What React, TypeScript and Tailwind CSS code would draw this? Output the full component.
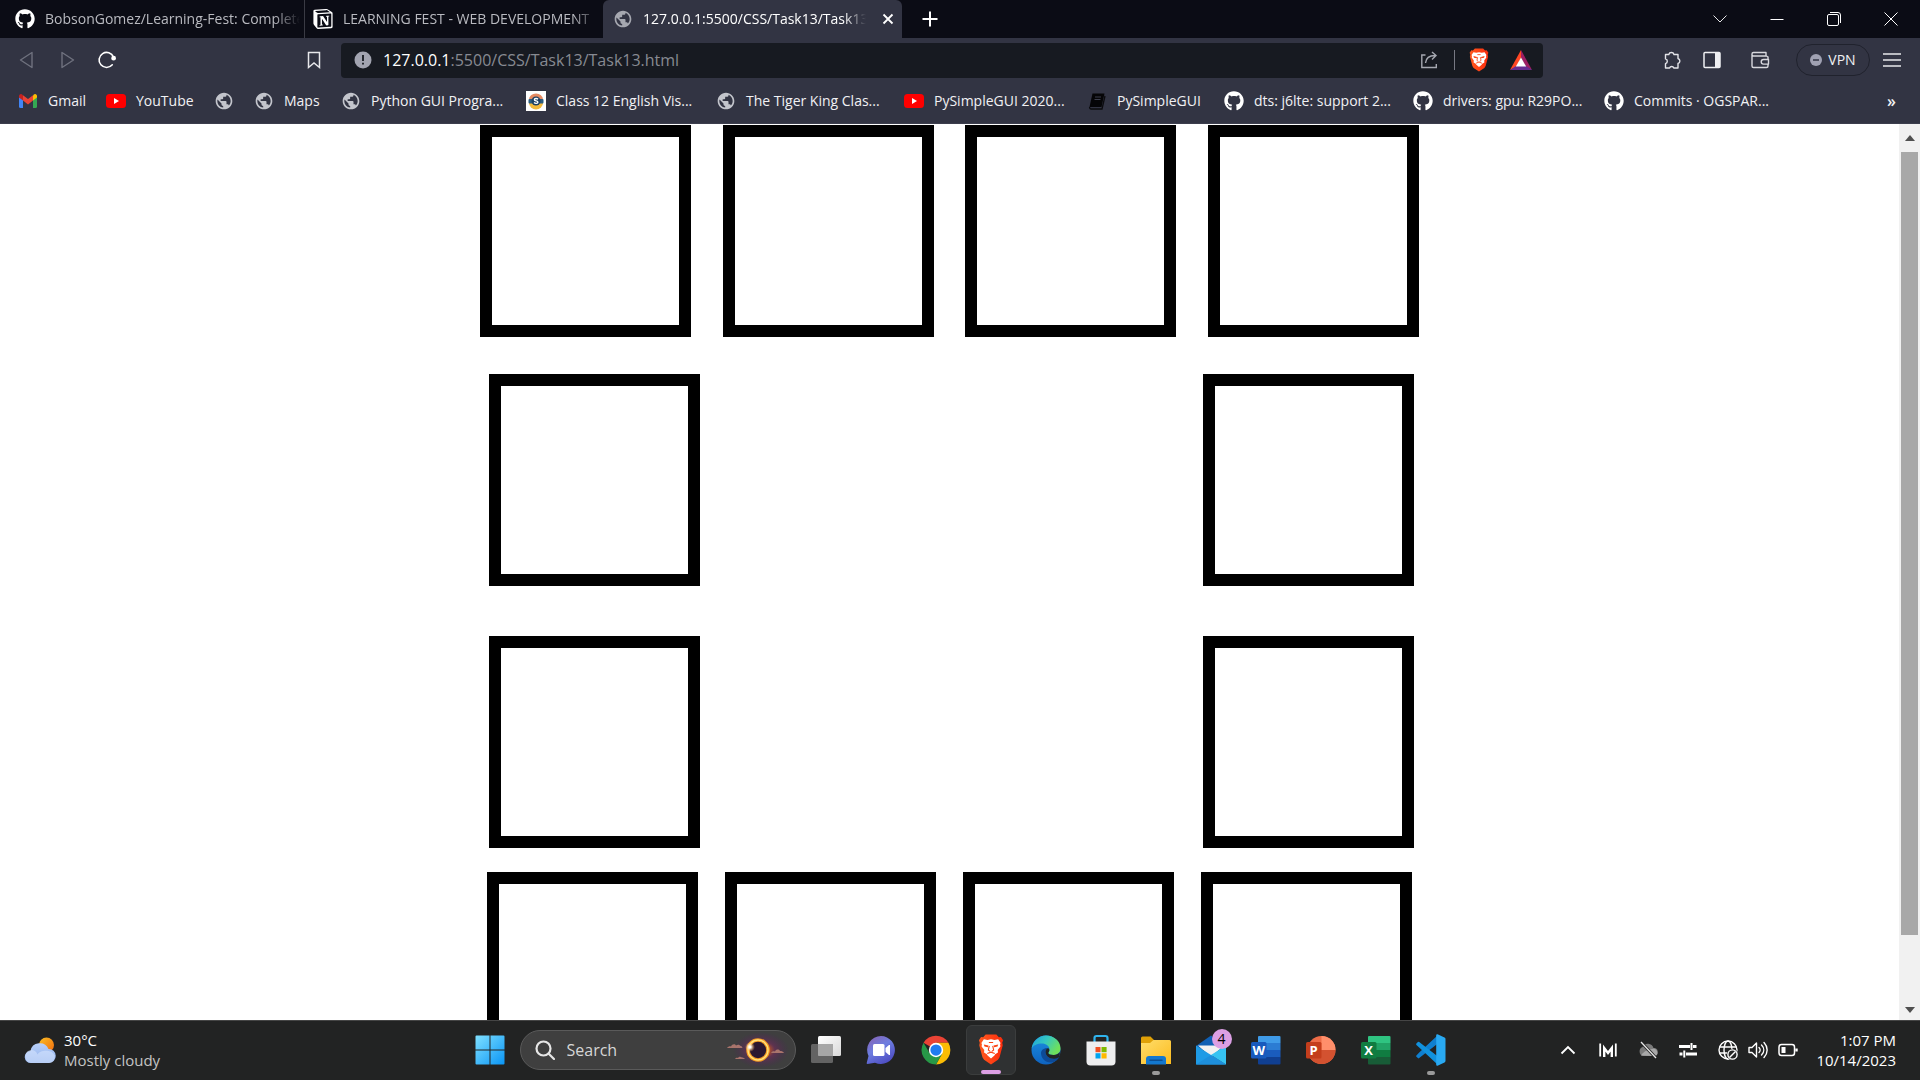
import React from "react";
import { FaGithub } from "react-icons/fa";
import { MdPublic } from "react-icons/md";
import { SiNotion } from "react-icons/si";

type IconProps = { className?: string };

/* ---------- favicons ---------- */

const GlobeIcon = () => <MdPublic className="size-5 text-[#c3c5cc]" />;
const GithubIcon = () => <FaGithub className="size-5 text-white" />;

const YoutubeIcon = () => (
  <svg viewBox="0 0 20 20" className="size-5">
    <rect x="0" y="3" width="20" height="14" rx="3.5" fill="#f00" />
    <path d="M8 7v6l5-3z" fill="#fff" />
  </svg>
);

const GmailIcon = () => (
  <svg viewBox="0 0 20 20" className="size-5">
    <path d="M1 6v9.5A1.5 1.5 0 0 0 2.500 17H5V8z" fill="#4285f4" />
    <path d="M19 6v9.500A1.500 1.500 0 0 1 17.500 17H15V8z" fill="#34a853" />
    <path d="M15 4.500V9.600l4-3V5a2 2 0 0 0-3.200-1.600z" fill="#fbbc04" />
    <path d="M5 4.500V9.600l-4-3V5a2 2 0 0 1 3.200-1.600z" fill="#c5221f" />
    <path d="M5 9.600V4.200l5 3.800 5-3.800v5.400l-5 3.800z" fill="#ea4335" />
  </svg>
);

const SchoolIcon = () => (
  <svg viewBox="0 0 20 20" className="size-5">
    <rect width="20" height="20" fill="#fff" />
    <path d="M3 8.500a7 6 0 0 1 14 0z" fill="#e58a62" />
    <path d="M3 12a7 6.500 0 0 0 14 0z" fill="#f3b93c" />
    <rect x="2.500" y="8" width="15" height="4.500" rx="1" fill="#2b5d80" />
    <circle cx="10" cy="10" r="4.500" fill="#1c3f63" />
    <path d="M12 8.200c-1-1-3.600-.9-3.600.5 0 1.600 3.500.8 3.500 2.500 0 1.400-2.700 1.500-3.900.4" fill="none" stroke="#fff" strokeWidth="1.400" />
  </svg>
);

const BookIcon = () => (
  <svg viewBox="0 0 20 20" className="size-5">
    <path d="M5.500 2.500h12l-3 13.500h-12z" fill="#050507" />
    <path d="M2.500 16c0 1.500.5 2 1.500 2h11l3-13" fill="none" stroke="#0b0b0e" strokeWidth="1.300" />
    <path d="M8 6h6M7.500 8.500h6" stroke="#3d3f4d" strokeWidth="1" />
  </svg>
);

/* Notion mark on a white cube face */
const NotionIcon = () => (
  <span className="flex size-5 items-center justify-center">
    <SiNotion className="size-5 text-white" />
  </span>
);

const BraveIcon = ({ className = "" }: IconProps) => (
  <svg viewBox="0 0 24 29" className={className}>
    <defs>
      <linearGradient id="brave" x1="0" y1="0" x2="1" y2="0">
        <stop offset="0" stopColor="#ff5a1f" />
        <stop offset="1" stopColor="#fb2b0c" />
      </linearGradient>
    </defs>
    <path d="M7 .5h10l2.300 2.600 2-.3 2 3-.8 2.400.5 2.300-3 11.300-1.500 2.300L12 28.500l-6.500-4.400L4 21.800 1 10.500l.5-2.300L.7 5.800l2-3 2 .3z" fill="url(#brave)" />
    <path d="M12 5l3.300.6 3.400-.6 2.300 3.400-.5 1.200.3 2-2.500 3.400.2 2.400-2.600 1.500-.7 1.300L12 23l-3.200-2.800-.7-1.300-2.600-1.500.2-2.400-2.500-3.400.3-2-.5-1.200L5.300 5l3.400.6z" fill="#fff" />
    <path d="M5.300 9.800l4.300 1-.4 1.700-3.300-.7zM18.700 9.800l-4.300 1 .4 1.700 3.300-.7z" fill="#fb4213" />
    <path d="M10.400 11l-.9 4 1.700 1.300M13.600 11l.9 4-1.700 1.300M8.500 18.300L12 17l3.500 1.300M10 8h4" fill="none" stroke="#fb4213" strokeWidth="1" />
  </svg>
);

/* ---------- window data ---------- */

const tabs = [
  { title: "BobsonGomez/Learning-Fest: Complete", icon: <GithubIcon />, active: false },
  { title: "LEARNING FEST - WEB DEVELOPMENT", icon: <NotionIcon />, active: false },
  { title: "127.0.0.1:5500/CSS/Task13/Task13.html", icon: <GlobeIcon />, active: true },
];

const bookmarks = [
  { label: "Gmail", icon: <GmailIcon />, width: "w-[88px]" },
  { label: "YouTube", icon: <YoutubeIcon />, width: "w-[108px]" },
  { label: "", icon: <GlobeIcon />, width: "w-10" },
  { label: "Maps", icon: <GlobeIcon />, width: "w-[87px]" },
  { label: "Python GUI Progra...", icon: <GlobeIcon />, width: "w-[185px]" },
  { label: "Class 12 English Vis...", icon: <SchoolIcon />, width: "w-[190px]" },
  { label: "The Tiger King Clas...", icon: <GlobeIcon />, width: "w-[188px]" },
  { label: "PySimpleGUI 2020...", icon: <YoutubeIcon />, width: "w-[183px]" },
  { label: "PySimpleGUI", icon: <BookIcon />, width: "w-[137px]" },
  { label: "dts: j6lte: support 2...", icon: <GithubIcon />, width: "w-[189px]" },
  { label: "drivers: gpu: R29PO...", icon: <GithubIcon />, width: "w-[191px]" },
  { label: "Commits · OGSPAR...", icon: <GithubIcon />, width: "w-[188px]" },
];

/* ---------- browser chrome ---------- */

function TabStrip() {
  return (
    <div className="flex h-[38px] shrink-0 items-stretch bg-[#0b0c15]">
      {tabs.map((t, i) => (
        <div
          key={t.title}
          className={
            t.active
              ? "flex w-[299px] items-center rounded-t-md bg-[#323443] pl-2.5 pr-1"
              : i === 0
                ? "flex w-[305px] items-center border-r border-[#3a3b44] pl-[15px] pr-1"
                : "flex w-[298px] items-center pl-2 pr-1"
          }
        >
          <span className={t.active ? "shrink-0 opacity-80" : "shrink-0"}>{t.icon}</span>
          <a
            href="#"
            className={
              "ml-2.5 min-w-0 flex-1 overflow-hidden whitespace-nowrap text-sm mask-r-from-90% " +
              (t.active ? "font-medium text-white" : "text-[#b9bac0]")
            }
          >
            {t.title}
          </a>
          {t.active && (
            <button aria-label="Close tab" className="ml-3 flex size-5 items-center justify-center">
              <svg viewBox="0 0 12 12" className="size-3">
                <path d="M1.500 1.500l9 9M10.500 1.500l-9 9" stroke="#fff" strokeWidth="1.800" />
              </svg>
            </button>
          )}
        </div>
      ))}
      <button aria-label="New tab" className="ml-4 flex w-6 items-center justify-center">
        <svg viewBox="0 0 16 16" className="size-4">
          <path d="M8 .5v15M.5 8h15" stroke="#fff" strokeWidth="2" />
        </svg>
      </button>
      <div className="ml-auto flex items-stretch pr-px">
        <button aria-label="Search tabs" className="flex w-14 items-center justify-center">
          <svg viewBox="0 0 16 16" className="size-4" fill="none" stroke="#e6e6e8">
            <path d="M1.500 4.500L8 11l6.500-6.500" />
          </svg>
        </button>
        <button aria-label="Minimize" className="flex w-[57px] items-center justify-center">
          <svg viewBox="0 0 14 14" className="size-3.5" stroke="#fff">
            <path d="M.5 7.500h13" />
          </svg>
        </button>
        <button aria-label="Restore" className="flex w-[57px] items-center justify-center">
          <svg viewBox="0 0 14 14" className="size-3.5" fill="none" stroke="#fff">
            <rect x=".5" y="2.500" width="11" height="11" rx="1.500" />
            <path d="M3 .5h8a2.500 2.500 0 0 1 2.500 2.500v8" />
          </svg>
        </button>
        <button aria-label="Close" className="flex w-[57px] items-center justify-center">
          <svg viewBox="0 0 14 14" className="size-3.5" stroke="#fff">
            <path d="M.5.5l13 13M13.500.5l-13 13" />
          </svg>
        </button>
      </div>
    </div>
  );
}

function Toolbar() {
  return (
    <div className="flex h-11 shrink-0 items-center bg-[#323443]">
      <div className="flex w-[341px] shrink-0 items-center pl-[7px]">
        <button aria-label="Back" className="flex w-10 justify-center">
          <svg viewBox="0 0 20 20" className="size-5" fill="none" stroke="#6f717e" strokeWidth="1.400" strokeLinejoin="round">
            <path d="M15 2.500v15L3.500 10z" />
          </svg>
        </button>
        <button aria-label="Forward" className="flex w-10 justify-center">
          <svg viewBox="0 0 20 20" className="size-5" fill="none" stroke="#6f717e" strokeWidth="1.400" strokeLinejoin="round">
            <path d="M5 2.500v15L16.500 10z" />
          </svg>
        </button>
        <button aria-label="Reload" className="flex w-10 justify-center">
          <svg viewBox="0 0 20 20" className="size-5" fill="none" stroke="#fff" strokeWidth="1.600" strokeLinecap="round">
            <path d="M15.300 14.800A7.500 7.500 0 1 1 16.500 7" />
            <circle cx="16.600" cy="8.200" r="1.600" fill="#fff" />
          </svg>
        </button>
        <button aria-label="Bookmark this tab" className="ml-auto mr-[17px] flex w-5 justify-center">
          <svg viewBox="0 0 20 20" className="size-5" fill="none" stroke="#e8e8ec" strokeWidth="1.500">
            <path d="M4.500 2.500h11v15L10 13l-5.500 4.500z" />
          </svg>
        </button>
      </div>

      <div className="flex h-[35px] min-w-0 flex-1 items-center rounded bg-[#171a21] pl-3 pr-2.5">
        <button aria-label="Site information" className="flex size-5 shrink-0 items-center justify-center">
          <svg viewBox="0 0 20 20" className="size-5">
            <circle cx="10" cy="10" r="8.500" fill="#a2a4b0" />
            <path d="M10 5v6M10 12.800v1.800" stroke="#171a21" strokeWidth="1.800" />
          </svg>
        </button>
        <div className="ml-2.5 min-w-0 flex-1 whitespace-nowrap text-base leading-6 text-[#878a92]">
          <span className="text-white">127.0.0.1</span>:5500/CSS/Task13/Task13.html
        </div>
        <button aria-label="Share" className="flex size-6 shrink-0 items-center justify-center">
          <svg viewBox="0 0 20 20" className="size-5" fill="none" stroke="#a5a7b0" strokeWidth="1.400">
            <path d="M5.500 5H1.800v12.500h14.500V14" />
            <path d="M5.500 13c.5-5 4-7.500 9.500-7.500M12 2l4 3.500-4 4" />
          </svg>
        </button>
        <span className="mx-3 h-5 w-px bg-[#777983]" />
        <button aria-label="Brave Shields" className="flex size-6 shrink-0 items-center justify-center">
          <BraveIcon className="h-6 w-5" />
        </button>
        <button aria-label="Brave Rewards" className="ml-[18px] flex size-6 shrink-0 items-center justify-center">
          <svg viewBox="0 0 24 22" className="h-[22px] w-6">
            <path d="M12 1L1 21l6-3 5-9z" fill="#ff4724" />
            <path d="M12 1l11 20-6-3-5-9z" fill="#9e1f63" />
            <path d="M1 21h22l-6-4H7z" fill="#662d91" />
            <path d="M12 8.500L6.800 17.500h10.400z" fill="#fff" />
          </svg>
        </button>
      </div>

      <div className="flex shrink-0 items-center pl-[117px] pr-4">
        <button aria-label="Extensions" className="flex size-6 items-center justify-center">
          <svg viewBox="0 0 20 20" className="size-5" fill="none" stroke="#e3e3e8" strokeWidth="1.400" strokeLinejoin="round">
            <path d="M3.500 4.500h3.300a2.700 2.700 0 0 1 5.200 0h4v4a2.600 2.600 0 0 1 0 5v4.500h-4.200a2.200 2.200 0 0 0-4.200 0H3.500v-4.300a2.500 2.500 0 0 0 0-4.800z" />
          </svg>
        </button>
        <button aria-label="Side panel" className="ml-4 flex size-6 items-center justify-center">
          <svg viewBox="0 0 20 20" className="size-5">
            <rect x="2" y="2.500" width="16" height="15" rx="1" fill="none" stroke="#f0f0f3" strokeWidth="1.500" />
            <rect x="13" y="2.500" width="5" height="15" fill="#f0f0f3" />
          </svg>
        </button>
        <button aria-label="Wallet" className="ml-6 flex size-6 items-center justify-center">
          <svg viewBox="0 0 20 20" className="size-5" fill="none" stroke="#d8d8de" strokeWidth="1.400" strokeLinejoin="round">
            <path d="M18 6.500V16a1.500 1.500 0 0 1-1.500 1.500h-13A1.500 1.500 0 0 1 2 16V4a1.500 1.500 0 0 1 1.500-1.500H16v3.500M2 4.500c0 1 .7 1.500 1.500 1.500H16.500L18 7" />
            <path d="M18.500 9.500H13.500a2.300 2.300 0 0 0 0 4.600h5z" fill="#323443" />
          </svg>
        </button>
        <button className="ml-6 flex h-8 w-[74px] items-center justify-center gap-1.5 rounded-full border border-[#20222d] text-sm text-[#f0f0f3]">
          <svg viewBox="0 0 12 12" className="size-3">
            <circle cx="6" cy="6" r="6" fill="#a0a1b2" />
            <path d="M3 6h6" stroke="#323443" strokeWidth="1.500" />
          </svg>
          VPN
        </button>
        <button aria-label="Menu" className="ml-2.5 flex size-6 items-center justify-center">
          <svg viewBox="0 0 18 18" className="size-[18px]" stroke="#e8e8ec" strokeWidth="1.400">
            <path d="M0 3h18M0 9h18M0 15h18" />
          </svg>
        </button>
      </div>
    </div>
  );
}

function BookmarksBar() {
  return (
    <nav aria-label="Bookmarks" className="flex h-[42px] shrink-0 items-center border-b border-[#3c3e4d] bg-[#323443] pb-1 pl-[18px] pr-6 text-sm text-[#f1f1f4]">
      {bookmarks.map((b, i) => (
        <a key={i} href="#" aria-label={b.label || "Bookmark"} className={"flex shrink-0 items-center gap-2.5 whitespace-nowrap " + b.width}>
          <span className="shrink-0">{b.icon}</span>
          {b.label && <span>{b.label}</span>}
        </a>
      ))}
      <button aria-label="More bookmarks" className="ml-auto text-base font-semibold leading-5">»</button>
    </nav>
  );
}

/* ---------- page content ---------- */

const Box = () => <div className="h-[212px] w-[211px] shrink-0 border-12 border-black" />;

function Viewport() {
  return (
    <div className="flex min-h-0 flex-1 bg-white">
      <main className="flex min-w-0 flex-1 flex-col items-center overflow-hidden pt-px">
        <div className="flex w-[939px] justify-between"><Box /><Box /><Box /><Box /></div>
        <div className="ml-1 mt-[37px] flex w-[925px] justify-between"><Box /><Box /></div>
        <div className="ml-1 mt-[50px] flex w-[925px] justify-between"><Box /><Box /></div>
        <div className="mt-6 flex w-[925px] justify-between"><Box /><Box /><Box /><Box /></div>
      </main>
      <div className="flex w-[21px] shrink-0 flex-col items-center bg-[#f1f1f1]">
        <button aria-label="Scroll up" className="flex h-7 shrink-0 items-center justify-center">
          <svg viewBox="0 0 10 6" className="h-1.5 w-2.5"><path d="M5 0l5 6H0z" fill="#505050" /></svg>
        </button>
        <div className="flex w-full flex-1 flex-col px-0.5">
          <div className="h-[783px] bg-[#a8a8a8]" />
        </div>
        <button aria-label="Scroll down" className="flex h-[21px] shrink-0 items-center justify-center">
          <svg viewBox="0 0 10 6" className="h-1.5 w-2.5"><path d="M5 6l5-6H0z" fill="#505050" /></svg>
        </button>
      </div>
    </div>
  );
}

/* ---------- taskbar ---------- */

const WindowsIcon = () => (
  <svg viewBox="0 0 30 30" className="size-[30px]">
    <defs>
      <linearGradient id="win" x1="0" y1="0" x2="1" y2="1">
        <stop offset="0" stopColor="#7fe0ff" />
        <stop offset="1" stopColor="#0a95f5" />
      </linearGradient>
    </defs>
    <path d="M1.500.5H14.500V14.500H.5V1.500a1 1 0 0 1 1-1zM15.500.5h13a1 1 0 0 1 1 1v13h-14zM.5 15.500h14v14h-13a1 1 0 0 1-1-1zM15.500 15.500h14v13a1 1 0 0 1-1 1h-13z" fill="url(#win)" />
  </svg>
);

const EclipseIcon = () => (
  <svg viewBox="0 0 64 38" className="h-[38px] w-16">
    <defs>
      <radialGradient id="glow">
        <stop offset=".3" stopColor="#c0522a" stopOpacity=".9" />
        <stop offset=".5" stopColor="#6b2d57" stopOpacity=".7" />
        <stop offset="1" stopColor="#4a2458" stopOpacity="0" />
      </radialGradient>
      <radialGradient id="flare">
        <stop offset=".2" stopColor="#fff" />
        <stop offset="1" stopColor="#ffb54a" stopOpacity="0" />
      </radialGradient>
    </defs>
    <ellipse cx="36" cy="19" rx="28" ry="18" fill="url(#glow)" />
    <circle cx="33" cy="19" r="10" fill="#2b1830" stroke="#f59a23" strokeWidth="3.600" />
    <circle cx="33" cy="19" r="10" fill="none" stroke="#ffe27a" strokeWidth="1.400" />
    <circle cx="25" cy="16" r="5" fill="url(#flare)" />
    <path d="M2 17c1-1.500 3-2 4-1.500 1-2.500 4-3 5-1 2-1.500 4-.5 4.500.5 1 0 1.500.5 2 2zM46 22c1-1.500 2-2 4-1.500 1-2.500 4-2.500 5-.5 2 0 3 .5 4 2zM10 28c1-1.500 2-1.500 3-1 1-2 3-1.500 4-.5 1.500 0 2 .5 3 1.500z" fill="#a9746c" />
  </svg>
);

const TaskViewIcon = () => (
  <svg viewBox="0 0 30 30" className="size-[30px]">
    <defs>
      <linearGradient id="tv" x1="0" y1="0" x2="1" y2="1">
        <stop offset="0" stopColor="#fff" />
        <stop offset="1" stopColor="#d9d9d9" />
      </linearGradient>
    </defs>
    <rect x="7" y="1" width="23" height="20" rx="1.500" fill="url(#tv)" />
    <rect x="0" y="9" width="22" height="19" rx="1.500" fill="#6e6e6e" fillOpacity=".85" />
    <path d="M7 9h15v12H8a1 1 0 0 1-1-1z" fill="#a6a6a6" />
  </svg>
);

const ChatIcon = () => (
  <svg viewBox="0 0 30 30" className="size-[30px]">
    <defs>
      <linearGradient id="chat" x1="0" y1="0" x2=".6" y2="1">
        <stop offset="0" stopColor="#8a5fae" />
        <stop offset=".5" stopColor="#6d7de0" />
        <stop offset="1" stopColor="#4f4fc4" />
      </linearGradient>
    </defs>
    <path d="M15 1a14 14 0 1 1-6 26.700L1.500 29c-.7 0-1-.5-.8-1.100L2.500 21A14 14 0 0 1 15 1z" fill="url(#chat)" />
    <rect x="7" y="9" width="11.500" height="12" rx="1.500" fill="#fff" />
    <path d="M19.500 13l3.500-3h1v10h-1l-3.500-3z" fill="#fff" />
  </svg>
);

const ChromeIcon = () => (
  <svg viewBox="0 0 48 48" className="size-[30px]">
    <path d="M24 24L4.080 12.500A23 23 0 0 1 43.900 12.500L24 12.500z" fill="#ea4335" />
    <path d="M24 12.500H43.900A23 23 0 0 1 24 47L33.900 29.700z" fill="#fbbc04" />
    <path d="M14.100 29.700L4.080 12.500A23 23 0 0 0 24 47L33.900 29.700z" fill="#279847" />
    <circle cx="24" cy="24" r="11.500" fill="#fff" />
    <circle cx="24" cy="24" r="9" fill="#1f7cf0" />
  </svg>
);

const EdgeIcon = () => (
  <svg viewBox="0 0 30 30" className="size-[30px]">
    <defs>
      <linearGradient id="e1" x1="0" y1="0" x2="1" y2=".5">
        <stop offset="0" stopColor="#1b9fe0" />
        <stop offset=".5" stopColor="#35c7c0" />
        <stop offset="1" stopColor="#6fe05a" />
      </linearGradient>
      <linearGradient id="e2" x1="0" y1="0" x2="0" y2="1">
        <stop offset="0" stopColor="#1b8fe0" />
        <stop offset="1" stopColor="#0f63c0" />
      </linearGradient>
    </defs>
    <circle cx="15" cy="15" r="14.500" fill="url(#e2)" />
    <path d="M10 18c0 5 4 10 11 9.500 3-.5 5.500-2.500 7.500-5.500-8 4-14 .5-14-5 0-2 1-3 2-4-4 0-6.500 2.500-6.500 5z" fill="#0d4a97" />
    <path d="M.6 13.500C2 6 8 .5 15 .5c8 0 14.500 5.500 14.500 13 0 4-3 6.500-7 6.500-3 0-5.200-1-5.200-2 0-.8 1.200-1.300 1.200-3.500C18.500 11 15 8.500 11 8.500 6 8.500 2 10.500.6 13.500z" fill="url(#e1)" />
    <path d="M14.500 17c0-2 1-3.200 2.500-4 1 .7 1.500 1.500 1.400 2.500-.2 1.200-1.100 1.700-1.100 2.500 0 1 2.200 2 5.200 2 2.500 0 5-1 6.200-3 .2 2.500 0 3.500-.8 5.200-7 3.800-13.400-.2-13.400-5.200z" fill="#222425" />
  </svg>
);

const StoreIcon = () => (
  <svg viewBox="0 0 30 32" className="h-8 w-[30px]">
    <path d="M8.500 9V4a2 2 0 0 1 2-2h9a2 2 0 0 1 2 2v5" fill="none" stroke="#2fb4ee" strokeWidth="2.200" />
    <path d="M.5 7.500h29v20a4 4 0 0 1-4 4h-21a4 4 0 0 1-4-4z" fill="#eeeeef" />
    <path d="M9.500 13H14.500V18.200H9.500z" fill="#f25022" />
    <path d="M15.500 13H20.600V18.200H15.500z" fill="#7fba00" />
    <path d="M9.500 19.200H14.500V24.500H9.500z" fill="#00a4ef" />
    <path d="M15.500 19.200H20.600V24.500H15.500z" fill="#ffb900" />
  </svg>
);

const FolderIcon = () => (
  <svg viewBox="0 0 30 30" className="size-[30px]">
    <defs>
      <linearGradient id="fd" x1="0" y1="0" x2="1" y2="1">
        <stop offset="0" stopColor="#ffdd6b" />
        <stop offset="1" stopColor="#fcbc1f" />
      </linearGradient>
    </defs>
    <path d="M0 10V3a1.500 1.500 0 0 1 1.500-1.500H9.500L13 5v5z" fill="#dfa007" />
    <path d="M0 8h9l3.500-3H28.500A1.500 1.500 0 0 1 30 6.500V29H0z" fill="url(#fd)" />
    <path d="M5 29.500V24a3 3 0 0 1 3-3H22a3 3 0 0 1 3 3v5.500z" fill="#1378cf" />
    <path d="M9 25.200h12" stroke="#0b4f94" strokeWidth="1.500" strokeLinecap="round" />
  </svg>
);

const MailIcon = () => (
  <svg viewBox="0 0 30 30" className="size-[30px]">
    <path d="M0 11L15 .5 30 11v4H0z" fill="#0f5fb4" />
    <path d="M2 10.500H28L15 22z" fill="#f1f1f1" />
    <path d="M0 10.500L15 20 30 29.500H0z" fill="#1f9be6" />
    <path d="M30 10.500V29.500L15 20z" fill="#36c3f2" />
    <path d="M0 29.500L15 20l15 9.500z" fill="#1e8fdc" />
  </svg>
);

function OfficeIcon({ letter, bands, plate, round }: { letter: string; bands: string[]; plate: string; round?: boolean }) {
  const clip = "clip-" + letter;
  return (
    <svg viewBox="0 0 30 30" className="size-[30px]">
      <defs>
        <clipPath id={clip}>
          {round ? <circle cx="15.500" cy="15" r="14" /> : <rect x="7" y="1" width="22.500" height="28.500" rx="1" />}
        </clipPath>
      </defs>
      <g clipPath={"url(#" + clip + ")"}>
        {round ? (
          <>
            <rect width="30" height="30" fill={bands[0]} />
            <rect x="15.500" width="15" height="15" fill={bands[1]} />
            <rect y="15" width="30" height="15" fill={bands[2]} />
          </>
        ) : (
          <>
            <rect width="30" height="8" fill={bands[0]} />
            <rect y="8" width="30" height="7.200" fill={bands[1]} />
            <rect y="15" width="30" height="7.200" fill={bands[2]} />
            <rect y="22" width="30" height="8" fill={bands[3]} />
          </>
        )}
      </g>
      <rect x="0" y="7" width="15.500" height="16.500" rx="1.500" fill={plate} />
      <text x="7.700" y="19.800" textAnchor="middle" fontSize="13" fontWeight="700" fill="#fff">{letter}</text>
    </svg>
  );
}

const VscodeIcon = () => (
  <svg viewBox="0 0 30 32" className="h-8 w-[30px]">
    <path d="M21.500 1.500L3.200 18.600.4 21.400a1 1 0 0 0 0 1.300l1.500 1.400a1 1 0 0 0 1.300 0L22.500 9z" fill="#0f7fcf" />
    <path d="M21.500 30.500L3.200 13.400.4 10.900a1 1 0 0 1 0-1.300L1.900 8.100a1 1 0 0 1 1.300 0L22.500 23z" fill="#1191dd" />
    <path d="M21.500.3l7 3.300a1.500 1.500 0 0 1 1 1.400v22a1.500 1.500 0 0 1-1 1.400l-7 3.300c-.8.200-1.300-.2-1.300-.9V1.200c0-.7.5-1.100 1.300-.9z" fill="#29a9f2" />
  </svg>
);

const apps = [
  { name: "Task View", icon: <TaskViewIcon /> },
  { name: "Chat", icon: <ChatIcon /> },
  { name: "Google Chrome", icon: <ChromeIcon /> },
  { name: "Brave", icon: <BraveIcon className="h-[31px] w-[26px]" />, active: true },
  { name: "Microsoft Edge", icon: <EdgeIcon /> },
  { name: "Microsoft Store", icon: <StoreIcon /> },
  { name: "File Explorer", icon: <FolderIcon />, open: true },
  { name: "Mail", icon: <MailIcon />, badge: 4 },
  { name: "Word", icon: <OfficeIcon letter="W" bands={["#3f9be8", "#2b7cd3", "#1a5cbd", "#103f91"]} plate="#185abd" /> },
  { name: "PowerPoint", icon: <OfficeIcon letter="P" bands={["#ed6c47", "#ff8f6b", "#d35230", "#d35230"]} plate="#c43e1c" round /> },
  { name: "Excel", icon: <OfficeIcon letter="X" bands={["#2fc481", "#21a366", "#107c41", "#185c37"]} plate="#107c41" /> },
  { name: "Visual Studio Code", icon: <VscodeIcon />, open: true },
];

function Taskbar() {
  return (
    <footer className="grid h-[60px] shrink-0 grid-cols-[1fr_auto_1fr] items-center border-t border-[#454545] bg-[#222323] pb-0.5 text-white">
      <button className="flex items-center gap-2 justify-self-start pl-6 text-left text-[15px] leading-5">
        <svg viewBox="0 0 32 28" className="h-7 w-8">
          <defs>
            <linearGradient id="sun" x1="0" y1="0" x2="1" y2="1">
              <stop offset="0" stopColor="#fbbf24" />
              <stop offset="1" stopColor="#f06a0e" />
            </linearGradient>
            <linearGradient id="cld" x1="0" y1="0" x2="0" y2="1">
              <stop offset="0" stopColor="#b9d0fa" />
              <stop offset="1" stopColor="#8fb0ea" />
            </linearGradient>
          </defs>
          <circle cx="22.500" cy="9" r="7.500" fill="url(#sun)" />
          <path d="M7 27a6 6 0 0 1-.6-12A9.500 9.500 0 0 1 24.500 13 7 7 0 0 1 25 27z" fill="url(#cld)" />
          <path d="M1.500 22a6 6 0 0 1 12-3.500c2-4.500 14-6 17.300 1C31 25 28 27 25 27H7a6 6 0 0 1-5.500-5z" fill="#dbe8ff" fillOpacity=".55" />
        </svg>
        <span>
          <span className="block">30°C</span>
          <span className="block text-[#c4c4c4]">Mostly cloudy</span>
        </span>
      </button>

      <div className="flex items-center gap-[5px]">
        <button aria-label="Start" className="flex size-[50px] items-center justify-center"><WindowsIcon /></button>
        <label className="flex h-10 w-[276px] items-center rounded-full border border-[#5a5a5a] bg-[#3f3f3f] pl-3.5 pr-1.5">
          <svg viewBox="0 0 20 20" className="size-5 shrink-0" fill="none" stroke="#e6e6e6" strokeWidth="2.200">
            <circle cx="8.500" cy="8.500" r="7" />
            <path d="M13.500 13.500l5.500 5.500" strokeLinecap="round" />
          </svg>
          <input aria-label="Search" placeholder="Search" className="ml-3 w-full min-w-0 flex-1 bg-transparent text-base outline-none placeholder:text-[#d6d6d6]" />
          <span className="shrink-0"><EclipseIcon /></span>
        </label>
        {apps.map((a) => (
          <button
            key={a.name}
            aria-label={a.name}
            className={
              "relative flex size-[50px] items-center justify-center rounded-md " +
              (a.active ? "border border-[#3b3d3d] bg-[#2f3132]" : "")
            }
          >
            {a.icon}
            {a.active && <span className="absolute bottom-0 h-1 w-5 rounded-full bg-[#dc9fe4]" />}
            {a.open && <span className="absolute bottom-0 h-1 w-2 rounded-full bg-[#9a9a9a]" />}
            {a.badge && (
              <span className="absolute right-1 top-1 flex size-5 items-center justify-center rounded-full bg-[#dc9fe4] text-sm leading-5 text-black">
                {a.badge}
              </span>
            )}
          </button>
        ))}
      </div>

      <div className="flex items-center justify-self-end pr-6">
        <button aria-label="Show hidden icons" className="flex w-10 justify-center">
          <svg viewBox="0 0 16 16" className="size-4" fill="none" stroke="#fff" strokeWidth="1.800"><path d="M1.500 11.500L8 5l6.500 6.500" /></svg>
        </button>
        <button aria-label="Malwarebytes" className="flex w-10 justify-center">
          <svg viewBox="0 0 18 16" className="h-4 w-[18px]" fill="none" stroke="#fff" strokeWidth="2.400">
            <path d="M1.200 1.500v13M16.800 1.500v13" strokeWidth="1.800" />
            <path d="M5.200 15V6l3.800 5 3.800-5v9" />
          </svg>
        </button>
        <button aria-label="OneDrive" className="flex w-10 justify-center">
          <svg viewBox="0 0 20 18" className="h-[18px] w-5">
            <path d="M5 15A4.800 4.800 0 0 1 4.500 6 6 6 0 0 1 15.500 7 4 4 0 0 1 16 15z" fill="#7b7b7b" />
            <path d="M3 14.500c3-5 8-6 13-7 4 1 5 7 .5 7.500z" fill="#a8a8a8" />
            <path d="M3 1l15 16" stroke="#222" strokeWidth="3" />
            <path d="M3 1l15 16" stroke="#e8e8e8" strokeWidth="1.300" />
          </svg>
        </button>
        <button aria-label="Settings switcher" className="mr-2.5 flex w-10 justify-center">
          <svg viewBox="0 0 18 16" className="h-4 w-[18px]" stroke="#fff" strokeWidth="2.800">
            <path d="M0 4.500h11M14 4.500h3.500M.5 12h3M7 12h11" />
            <path d="M12.500 1v7M5.300 8.500v7" strokeWidth="2" />
          </svg>
        </button>
        <button aria-label="Network, sound and battery" className="flex items-center gap-2.5">
          <svg viewBox="0 0 20 20" className="size-5" fill="none" stroke="#fff" strokeWidth="1.400">
            <circle cx="10" cy="10" r="9" />
            <ellipse cx="10" cy="10" rx="4" ry="9" />
            <path d="M1.500 7h17M1.500 13h17" />
            <circle cx="14.500" cy="14.500" r="5.800" fill="#222323" stroke="none" />
            <circle cx="14.500" cy="14.500" r="4.600" />
            <path d="M11.500 17.500l6-6" />
          </svg>
          <svg viewBox="0 0 20 20" className="size-5" fill="none" stroke="#fff" strokeWidth="1.400" strokeLinejoin="round">
            <path d="M1 7.500h3L8.500 3v14L4 12.500H1z" />
            <path d="M11 7.500c1.500 1.500 1.500 3.500 0 5M13.500 5c3 3 3 7 0 10M16 2.500c4.200 4.500 4.200 10.500 0 15" strokeLinecap="round" />
          </svg>
          <svg viewBox="0 0 20 20" className="size-5" fill="none" stroke="#fff" strokeWidth="1.500">
            <rect x="1" y="4.500" width="15.500" height="11" rx="2.500" />
            <path d="M18.500 8.500v3" strokeWidth="2.400" />
            <rect x="3.500" y="7" width="4" height="6" fill="#fff" stroke="none" />
          </svg>
        </button>
        <button className="ml-[18px] w-20 whitespace-nowrap text-right text-[15px] leading-5">
          <span className="block">1:07 PM</span>
          <span className="block">10/14/2023</span>
        </button>
      </div>
    </footer>
  );
}

export default function App() {
  return (
    <div className="flex h-screen flex-col overflow-hidden font-['Segoe_UI','Open_Sans',sans-serif]">
      <TabStrip />
      <Toolbar />
      <BookmarksBar />
      <Viewport />
      <Taskbar />
    </div>
  );
}
